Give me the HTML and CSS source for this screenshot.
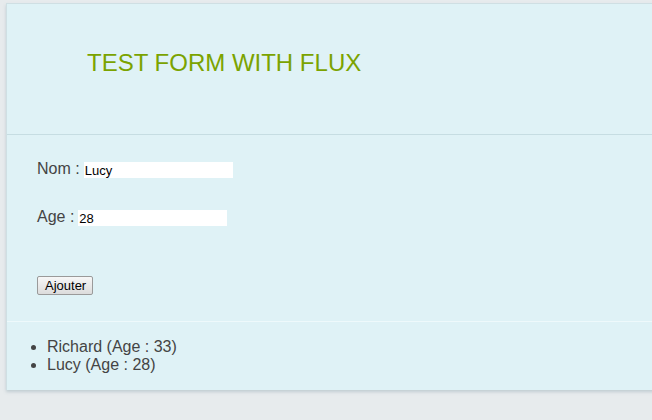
FILE: index.html
```html
<!DOCTYPE html>
<html>
<head>
<meta charset="utf-8">
<link rel="stylesheet" href="styles.css">
</head>
<body>
<div class="panel">
  <header class="head">
    <h1 class="title">TEST FORM WITH FLUX</h1>
  </header>
  <form class="form">
    <div class="row"><label class="lbl">Nom :</label><input class="field" type="text" value="Lucy"></div>
    <div class="row"><label class="lbl">Age :</label><input class="field" type="text" value="28"></div>
    <div class="actions"><button class="btn" type="button">Ajouter</button></div>
  </form>
  <ul class="list">
    <li>Richard (Age : 33)</li>
    <li>Lucy (Age : 28)</li>
  </ul>
</div>
</body>
</html>
```
FILE: styles.css
```css
html, body {
  margin: 0;
  padding: 0;
  background: #e7ebed;
  overflow: hidden;
  font-family: "Liberation Sans", Arial, sans-serif;
}
body {
  padding: 3px 0 0 6px;
  height: 420px;
  box-sizing: border-box;
}
.panel {
  width: 680px;
  background: #dff2f6;
  border-top: 1px solid #cfdfe3;
  border-left: 1px solid #cfdfe3;
  box-shadow: 0 2px 3px rgba(120, 150, 160, 0.35);
}
.head {
  height: 130px;
  border-bottom: 1px solid #c6dde2;
  display: flex;
  align-items: flex-start;
}
.title {
  margin: 45px 0 0 80px;
  font-weight: normal;
  font-size: 24px;
  line-height: 28px;
  color: #7ba300;
}
.form {
  padding: 23px 0 0 30px;
  border-bottom: 1px solid #eef9fb;
  height: 187px;
  box-sizing: border-box;
}
.row {
  display: flex;
  align-items: center;
  height: 24px;
  margin-bottom: 24px;
}
.lbl {
  font-size: 16px;
  color: #444;
  margin-right: 4px;
  position: relative;
  top: -1px;
}
.field {
  width: 149px;
  height: 16px;
  border: none;
  padding: 0 1px;
  box-sizing: border-box;
  background: #fff;
  font-family: "Liberation Sans", Arial, sans-serif;
  font-size: 13px;
  color: #000;
  outline: none;
}
.actions {
  padding-top: 22px;
  display: flex;
}
.btn {
  font-family: "Liberation Sans", Arial, sans-serif;
  font-size: 13px;
  color: #000;
  height: 19px;
  box-sizing: border-box;
  padding: 0 6px 0 7px;
  border: 1px solid #9a9a9a;
  border-radius: 2px;
  background: linear-gradient(#f7f7f7, #dcdcdc);
  line-height: 16px;
}
.list {
  margin: 0;
  padding: 16px 0 16px 40px;
  font-size: 16px;
  line-height: 18px;
  color: #444;
}
```
